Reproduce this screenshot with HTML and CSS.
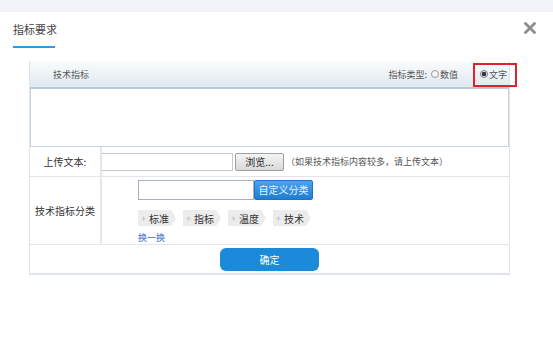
FILE: index.html
```html
<!DOCTYPE html>
<html>
<head>
<meta charset="utf-8">
<link rel="stylesheet" href="styles.css">
</head>
<body>
<div class="topband"></div>
<div class="titlebar">
  <div class="titlewrap">
    <div class="title">指标要求</div>
    <div class="uline"></div>
  </div>
  <svg class="close" width="12" height="12" viewBox="0 0 12 12"><path d="M1.5 1.5L10.5 10.5M10.5 1.5L1.5 10.5" stroke="#8c8c8c" stroke-width="2.8" stroke-linecap="round"/></svg>
</div>
<div class="panel">
  <div class="phead">
    <span class="ptitle">技术指标</span>
    <span class="ptype">指标类型:
      <span class="radio"></span>数值
      <span class="opt2"><span class="radio on"></span>文字</span>
    </span>
    <span class="redbox"></span>
  </div>
  <div class="textarea"></div>
  <div class="row upload">
    <div class="lbl">上传文本:</div>
    <div class="cell">
      <span class="file"></span><span class="browse">浏览...</span><span class="hint">（如果技术指标内容较多，请上传文本）</span>
    </div>
  </div>
  <div class="row cat">
    <div class="lbl">技术指标分类</div>
    <div class="cell catcell">
      <div class="catline"><span class="catinput"></span><span class="catbtn">自定义分类</span></div>
      <div class="tags">
        <span class="tag"><i>+</i>标准</span>
        <span class="tag"><i>+</i>指标</span>
        <span class="tag"><i>+</i>温度</span>
        <span class="tag"><i>+</i>技术</span>
      </div>
      <a class="swap">换一换</a>
    </div>
  </div>
  <div class="row btnrow">
    <span class="ok">确定</span>
  </div>
</div>
</body>
</html>
```
FILE: styles.css
```css
* { box-sizing: border-box; }
body {
  margin: 0;
  background: #fff;
  font-family: "Noto Sans CJK SC", "Noto Sans", sans-serif;
  color: #555;
  font-size: 11px;
  width: 553px;
  height: 351px;
  overflow: hidden;
}
.topband { height: 12px; background: #f2f3f9; }
.titlebar {
  display: flex;
  justify-content: space-between;
  align-items: flex-start;
  padding: 9px 17px 0 13px;
  height: 49px;
}
.titlewrap { display: flex; flex-direction: column; }
.title {
  font-size: 11px;
  color: #444;
  line-height: 16px;
  white-space: nowrap;
}
.uline {
  margin-top: 9px;
  width: 42px;
  height: 2px;
  background: #2b9ae0;
}
.close { margin-top: 1px; }
.panel {
  margin-left: 29px;
  width: 481px;
  border: 1px solid #dfe5ea;
  border-top: none;
}
.phead {
  position: relative;
  height: 28px;
  background: linear-gradient(#fafcfd, #dfe9f0);
  border-bottom: 2px solid #b9c9d5;
  display: flex;
  align-items: center;
  justify-content: space-between;
  padding: 0 2px 0 23px;
  font-size: 9px;
  color: #555;
}
.ptype { display: flex; align-items: center; }
.radio {
  display: inline-block;
  width: 8px; height: 8px;
  border: 1px solid #999;
  border-radius: 50%;
  background: #f6f6f6;
  margin: 0 1px 0 4px;
}
.radio.on { background: radial-gradient(circle, #333 0 2px, #e8eef3 2.5px); border-color: #778; }
.opt2 { display: inline-flex; align-items: center; margin-left: 18px; }
.redbox {
  position: absolute;
  left: 443px; top: 2px;
  width: 44px; height: 24px;
  border: 2px solid #e2212a;
}
.textarea {
  height: 58px;
  border: 1px solid #c9d5de;
  border-top: none;
  background: #fff;
}
.row { display: flex; border-bottom: 1px solid #e2e6ea; }
.lbl {
  width: 72px;
  border-right: 2px solid #e4e7ea;
  display: flex; align-items: center; justify-content: center;
  font-size: 10px;
  color: #333;
}
.cell { flex: 1; }
.upload { height: 30px; }
.upload .cell { display: flex; align-items: center; }
.file {
  display: inline-block;
  width: 131px; height: 18px;
  border: 1px solid #c8c8c8;
  border-left: none;
  background: #fff;
}
.browse {
  display: inline-block;
  margin-left: 2px;
  height: 18px; width: 49px;
  border: 1px solid #9aa0a6;
  border-radius: 2px;
  background: linear-gradient(#f4f4f4, #d9d9d9);
  font-size: 10px;
  color: #222;
  text-align: center;
  line-height: 16px;
}
.hint { font-size: 9px; color: #555; margin-left: 2px; }
.cat { height: 68px; }
.catcell { padding: 3px 0 0 36px; }
.catline { display: flex; height: 20px; }
.catinput {
  width: 116px; height: 20px;
  border: 1px solid #a9b0b7;
  background: #fff;
}
.catbtn {
  width: 59px; height: 20px;
  background: linear-gradient(#4aa3ec, #1f7ed3);
  border: 1px solid #2173c2;
  border-radius: 2px;
  color: #e8f3ff;
  font-size: 10px;
  text-align: center;
  line-height: 18px;
}
.tags { display: flex; gap: 7px; margin-top: 10px; height: 16px; }
.tag {
  display: inline-flex; align-items: center;
  height: 16px;
  padding: 0 7px 0 3px;
  background: #ececec;
  clip-path: polygon(0 0, calc(100% - 5px) 0, 100% 50%, calc(100% - 5px) 100%, 0 100%);
  font-size: 10px;
  color: #333;
}
.tag i { font-style: normal; color: #bbb; font-size: 9px; margin-right: 3px; }
.swap {
  display: block;
  margin-top: 6px;
  font-size: 9px;
  color: #3a6cc7;
  line-height: 12px;
}
.btnrow {
  height: 29px;
  border-bottom: 1px solid #dfe5ea;
  justify-content: center;
  align-items: center;
  padding-top: 1px;
}
.ok {
  width: 99px; height: 23px;
  background: #1b8bd9;
  border-radius: 6px;
  color: #fff;
  font-size: 10px;
  text-align: center;
  line-height: 23px;
}
```
